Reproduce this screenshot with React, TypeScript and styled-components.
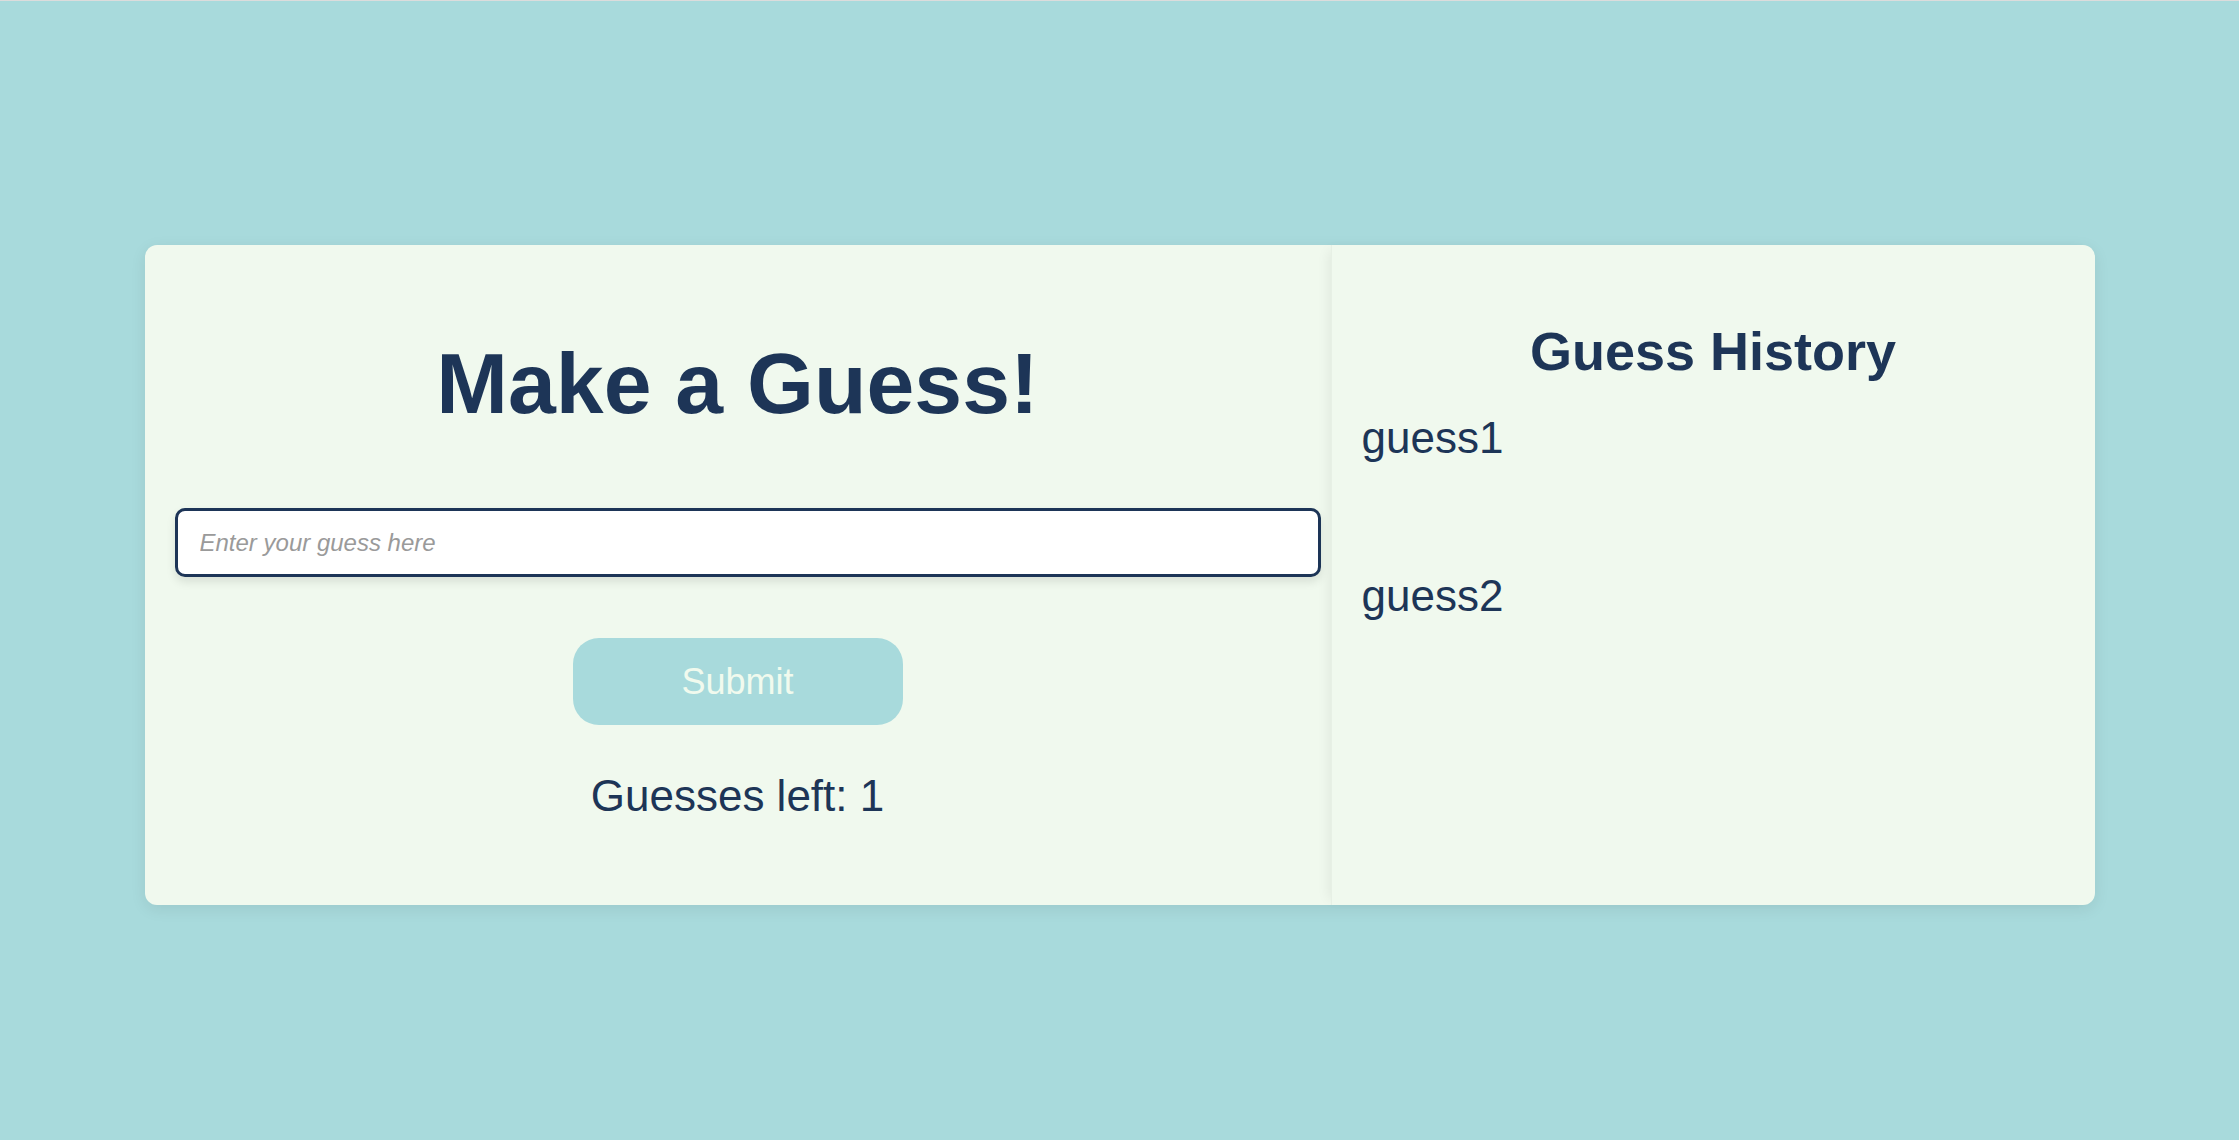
import styled, { createGlobalStyle } from "styled-components";

const GlobalStyle = createGlobalStyle`
  html, body {
    margin: 0;
    padding: 0;
  }
  body {
    font-family: "Liberation Sans", Arial, sans-serif;
    background-color: #a8dadc;
    border-top: 1px solid #dcdcdc;
  }
`;

const Page = styled.div`
  min-height: calc(100vh - 1px);
  box-sizing: border-box;
  padding-top: 244px;
  display: flex;
  justify-content: center;
  align-items: flex-start;
  background-color: #a8dadc;
`;

const Card = styled.div`
  width: 1950px;
  height: 660px;
  display: flex;
  background-color: #f0f9ee;
  border-radius: 12px;
  box-shadow: 0 4px 16px rgba(0, 0, 0, 0.08);
  color: #1d3557;
`;

const GuessPanel = styled.div`
  width: 1186px;
  box-sizing: border-box;
  padding: 88px 30px 0;
  display: flex;
  flex-direction: column;
  align-items: center;
`;

const Title = styled.h1`
  margin: 0;
  font-size: 86px;
  line-height: 100px;
  font-weight: 700;
  text-align: center;
`;

const GuessInput = styled.input`
  align-self: flex-start;
  width: calc(100% + 20px);
  height: 69px;
  margin-top: 75px;
  box-sizing: border-box;
  padding: 0 22px;
  border: 3px solid #1d3557;
  border-radius: 10px;
  background-color: #ffffff;
  box-shadow: 0 5px 10px rgba(0, 0, 0, 0.1);
  font-family: "Liberation Sans", Arial, sans-serif;
  font-size: 24px;
  color: #1d3557;
  outline: none;

  &::placeholder {
    color: #9a9a9a;
    font-style: italic;
  }
`;

const SubmitButton = styled.button`
  width: 330px;
  height: 87px;
  margin-top: 61px;
  border: none;
  border-radius: 26px;
  background-color: #a8dadc;
  color: #f1faee;
  font-family: "Liberation Sans", Arial, sans-serif;
  font-size: 36px;
  cursor: pointer;
`;

const GuessesLeft = styled.p`
  margin: 46px 0 0;
  font-size: 44px;
  line-height: 50px;
`;

const HistoryPanel = styled.div`
  flex: 1;
  box-sizing: border-box;
  padding: 75px 30px 0;
  border-left: 1px solid rgba(0, 0, 0, 0.035);
  box-shadow: -8px 0 12px -6px rgba(0, 0, 0, 0.07);
`;

const HistoryTitle = styled.h2`
  margin: 0 0 31px;
  font-size: 54px;
  line-height: 62px;
  font-weight: 700;
  text-align: center;
`;

const HistoryList = styled.ul`
  list-style: none;
  margin: 0;
  padding: 0;
  display: flex;
  flex-direction: column;
  gap: 108px;
`;

const HistoryItem = styled.li`
  font-size: 44px;
  line-height: 50px;
`;

const history = ["guess1", "guess2"];

export default function App() {
  return (
    <>
      <GlobalStyle />
      <Page>
        <Card>
          <GuessPanel>
            <Title>Make a Guess!</Title>
            <GuessInput type="text" placeholder="Enter your guess here" />
            <SubmitButton>Submit</SubmitButton>
            <GuessesLeft>Guesses left: 1</GuessesLeft>
          </GuessPanel>
          <HistoryPanel>
            <HistoryTitle>Guess History</HistoryTitle>
            <HistoryList>
              {history.map((g) => (
                <HistoryItem key={g}>{g}</HistoryItem>
              ))}
            </HistoryList>
          </HistoryPanel>
        </Card>
      </Page>
    </>
  );
}
